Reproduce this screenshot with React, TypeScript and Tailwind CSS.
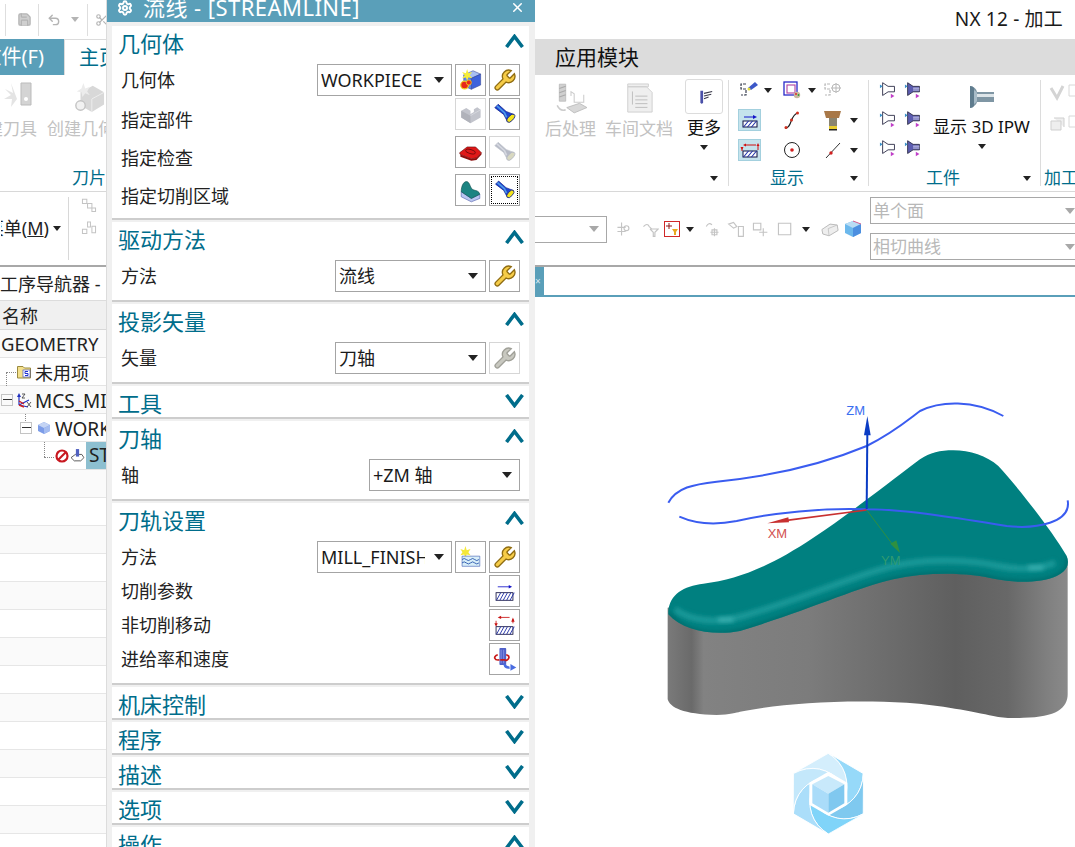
import { ReactNode } from 'react';
import { Save, Undo2, Scissors, Settings, X } from 'lucide-react';

const Caret = ({ cls = 'border-t-[#222]', small }: { cls?: string; small?: boolean }) => (
  <span className={`inline-block shrink-0 w-0 h-0 border-x-transparent ${small ? 'border-x-[4px] border-t-[5px]' : 'border-x-[5.5px] border-t-[6px]'} ${cls}`} />
);

function Chevron({ up }: { up?: boolean }) {
  return (
    <svg width="19" height="14" viewBox="0 0 19 14" className="mt-[8px] shrink-0">
      <path d={up ? 'M1.5 13 L9.5 2.5 L17.5 13' : 'M1.5 1 L9.5 11.5 L17.5 1'} fill="none" stroke="#006d8b" strokeWidth="3.6" />
    </svg>
  );
}

/* ---- dialog button icons, all on a 32 box ---- */
const Wrench = ({ muted }: { muted?: boolean }) => (
  <svg viewBox="0 0 24 24" className="w-[25px] h-[25px]">
    <path
      d="M14.7 6.3a1 1 0 0 0 0 1.4l1.6 1.6a1 1 0 0 0 1.4 0l3.77-3.77a6 6 0 0 1-7.94 7.94l-6.91 6.91a2.12 2.12 0 0 1-3-3l6.91-6.91a6 6 0 0 1 7.94-7.94l-3.76 3.76z"
      fill={muted ? '#c8c8c0' : '#f6cc48'}
      stroke={muted ? '#a0a098' : '#8f6c12'}
      strokeWidth="1.3"
    />
  </svg>
);

const Flashlight = ({ muted }: { muted?: boolean }) => (
  <svg viewBox="0 0 32 32" className="w-full h-full">
    <path d="M4.5 8.5 L8.5 4.5 L18 13 L27 16.5 L19.5 25 L15 16.5 Z" fill={muted ? '#b6bac6' : '#1d45d0'} stroke={muted ? '#c4c8d0' : '#0a1a80'} strokeWidth="0.8" />
    <path d="M7 6.5 L16 14.5 L18.5 20" fill="none" stroke={muted ? '#d5d8e0' : '#4f9ae8'} strokeWidth="2" />
    <ellipse cx="23.5" cy="21" rx="6" ry="3" transform="rotate(-48 23.5 21)" fill={muted ? '#d8d8c0' : '#f4e41c'} stroke={muted ? '#b6bac6' : '#10208c'} strokeWidth="1" />
  </svg>
);

const GeomNew = () => (
  <svg viewBox="0 0 32 32" className="w-full h-full">
    <path d="M8 10 L19 5 L28 9 L17 14 Z" fill="#a8bff2" stroke="#28388a" strokeWidth="0.6" />
    <path d="M17 14 L28 9 V22 L17 27 Z" fill="#3d62dc" stroke="#28388a" strokeWidth="0.6" />
    <path d="M8 10 L17 14 V27 L8 23 Z" fill="#5e86ec" stroke="#28388a" strokeWidth="0.6" />
    <path d="M12 3 L13.5 8 L18 6.5 L15 10.5 L18 14 L13.5 13 L12 17 L10.5 13 L6 14 L9 10.5 L6 6.5 L10.5 8 Z" fill="#f6ee38" />
    <circle cx="9" cy="22" r="4.6" fill="#e8281c" stroke="#f2d020" strokeWidth="1.4" />
    <circle cx="14" cy="19" r="3" fill="#e8281c" stroke="#f2d020" strokeWidth="1" />
  </svg>
);

const PartBlock = () => (
  <svg viewBox="0 0 32 32" className="w-full h-full">
    <path d="M5 12 L11 9 L16 12 L16 16 L20 13.5 L20 10.5 L24 8 L28 11 V20 L16 27 L5 20 Z" fill="#c2c4cc" />
    <path d="M5 12 L16 18 V27 L5 20 Z" fill="#b0b2ba" />
    <path d="M16 18 L20 15.5 L28 11" fill="none" stroke="#d8dae0" strokeWidth="1" />
  </svg>
);

const CheckBlock = () => (
  <svg viewBox="0 0 32 32" className="w-full h-full">
    <path d="M3 17 L12 10 L22 10 L29 17 L23 23 L17 24 L4 19 Z" fill="#e01818" stroke="#600808" strokeWidth="0.7" />
    <path d="M4 19 L17 24 L23 23 L29 17 V19 L23 25.5 L17 26.5 L4 21.5 Z" fill="#8c0c0c" />
    <ellipse cx="16" cy="15.5" rx="6" ry="2.4" transform="rotate(15 16 15.5)" fill="none" stroke="#700a0a" strokeWidth="1" />
  </svg>
);

const CutArea = () => (
  <svg viewBox="0 0 32 32" className="w-full h-full">
    <path d="M5 18 L17 26 L27 21 V26 L17 30 L5 24 Z" fill="#b9c6f0" stroke="#4a58a8" strokeWidth="0.7" />
    <path d="M5 18 C5 11 8 6 11 6 C16 6 15 15 20 16 C23 17 26 17 27 21 L17 26 Z" fill="#1c8482" stroke="#0d4a4a" strokeWidth="0.7" />
  </svg>
);

const Water = () => (
  <svg viewBox="0 0 32 32" className="w-full h-full">
    <path d="M10 3 L11.5 8 L16 6.5 L13.5 10.5 L16 14 L11.5 13 L10 17 L8.5 13 L4 14 L6.5 10.5 L4 6.5 L8.5 8 Z" fill="#f4e838" />
    <path d="M6 15 H27 V27 H6 Z" fill="#d8eef8" stroke="#3858b0" strokeWidth="0.7" />
    <path d="M6 19 q2.6 -2.5 5 0 t5 0 t5 0 t5 0 M6 23 q2.6 -2.5 5 0 t5 0 t5 0 t5 0" fill="none" stroke="#1c4ca8" strokeWidth="1" />
  </svg>
);

const Hatch = ({ x = 6, y = 18, w = 20, h = 9 }: { x?: number; y?: number; w?: number; h?: number }) => (
  <>
    <rect x={x} y={y} width={w} height={h} fill="#fff" stroke="#101040" strokeWidth="1" />
    {[3, 7, 11, 15, 19].filter(d => d < w).map(d => (
      <path key={d} d={`M${x + d - 2.5} ${y + h} L${x + d + 2.5} ${y}`} stroke="#2030a8" strokeWidth="1.1" />
    ))}
  </>
);

const CutParams = () => (
  <svg viewBox="0 0 32 32" className="w-full h-full">
    <path d="M8 11 H23" stroke="#1414c8" strokeWidth="1" />
    <path d="M25 11 L21 9 V13 Z" fill="#1414c8" />
    <Hatch />
  </svg>
);

const NonCut = () => (
  <svg viewBox="0 0 32 32" className="w-full h-full">
    <path d="M10 7 H22" stroke="#c81414" strokeWidth="1" />
    <path d="M8 7 L12 5 V9 Z" fill="#c81414" />
    <path d="M6 11 V16 M26 9 V14" stroke="#c81414" strokeWidth="1" />
    <path d="M6 18 L4 14 H8 Z M26 7 L24 12 H28 Z" fill="#c81414" />
    <Hatch y={18} h={9} />
  </svg>
);

const Feed = () => (
  <svg viewBox="0 0 32 32" className="w-full h-full">
    <rect x="10" y="3" width="8" height="20" rx="1" fill="#5060c8" />
    <path d="M12 5 V21 M15 5 V21" stroke="#8c98e8" strokeWidth="1" />
    <path d="M8 11 C2 13 4 18 10 17 M18 11 C23 12 22 17 17 18 M11 17 H17" fill="none" stroke="#c81818" strokeWidth="2" />
    <path d="M16 22 Q17 27 22 26" fill="none" stroke="#4a6ce0" strokeWidth="3" />
    <path d="M23 22 L30 26 L23 30 Z" fill="#4a6ce0" />
  </svg>
);

function IconBtn({ children, muted, dotted }: { children: ReactNode; muted?: boolean; dotted?: boolean }) {
  return (
    <div className={`w-[31px] h-[32px] shrink-0 border flex items-center justify-center bg-white ${muted ? 'border-[#d6d6d6]' : 'border-[#a4a4a4]'}`}>
      <div className={`w-[27px] h-[28px] flex items-center justify-center ${dotted ? 'border border-dotted border-black' : ''}`}>{children}</div>
    </div>
  );
}

function Dropdown({ text, w }: { text: string; w: string }) {
  return (
    <div className={`${w} h-[32px] shrink-0 border border-[#a4a4a4] bg-white flex items-center pl-[3px] pr-[7px]`}>
      <span className="flex-1 overflow-hidden whitespace-nowrap text-[18px] leading-[30px] text-[#1a1a1a] mr-[9px]">{text}</span>
      <Caret />
    </div>
  );
}

function Row({ label, children, shift }: { label: string; children?: ReactNode; shift?: boolean }) {
  return (
    <div className="h-[32px] flex items-center justify-end gap-[3px] px-[9px]">
      <span className={`mr-auto text-[18px] leading-[24px] text-[#222] ${shift ? 'pt-[12px]' : ''}`}>{label}</span>
      {children}
    </div>
  );
}

function Section({ title, open, children, up }: { title: string; open?: boolean; children?: ReactNode; up?: boolean }) {
  return (
    <div className="bg-white border-b-2 border-[#cdcdcd] shrink-0">
      <div className={`flex justify-between overflow-hidden pl-[6px] pr-[5px] ${open ? 'h-[38px]' : 'h-[31px]'}`}>
        <span className="text-[22px] leading-[35px] text-[#006d8b]">{title}</span>
        <Chevron up={up ?? open} />
      </div>
      {children}
    </div>
  );
}

function Dialog() {
  return (
    <div className="absolute top-0 left-[106px] w-[429px] h-[847px] overflow-hidden bg-[#f0f0f0] border-l border-[#dcdcdc]">
      <div className="h-[22px] bg-[#5a9fb9] flex items-start text-white">
        <Settings size={16} strokeWidth={3} className="ml-[10px]" />
        <span className="ml-[10px] text-[22px] leading-[14px] tracking-[0.45px] whitespace-nowrap">流线 - [STREAMLINE]</span>
        <X size={15} strokeWidth={2.4} className="ml-auto mr-[10px]" />
      </div>
      <div className="flex flex-col gap-[2px] pt-[4px] pl-[5px] pr-[6px]">
        <Section title="几何体" open>
          <Row label="几何体">
            <Dropdown text="WORKPIECE" w="w-[135px]" />
            <IconBtn><GeomNew /></IconBtn>
            <IconBtn><Wrench /></IconBtn>
          </Row>
          <div className="h-[2px]" />
          <Row label="指定部件" shift>
            <IconBtn muted><PartBlock /></IconBtn>
            <IconBtn><Flashlight /></IconBtn>
          </Row>
          <div className="h-[6px]" />
          <Row label="指定检查" shift>
            <IconBtn><CheckBlock /></IconBtn>
            <IconBtn muted><Flashlight muted /></IconBtn>
          </Row>
          <div className="h-[6px]" />
          <Row label="指定切削区域" shift>
            <IconBtn><CutArea /></IconBtn>
            <IconBtn dotted><Flashlight /></IconBtn>
          </Row>
          <div className="h-[12px]" />
        </Section>
        <Section title="驱动方法" open>
          <Row label="方法">
            <Dropdown text="流线" w="w-[151px]" />
            <IconBtn><Wrench /></IconBtn>
          </Row>
          <div className="h-[8px]" />
        </Section>
        <Section title="投影矢量" open>
          <Row label="矢量">
            <Dropdown text="刀轴" w="w-[151px]" />
            <IconBtn muted><Wrench muted /></IconBtn>
          </Row>
          <div className="h-[8px]" />
        </Section>
        <Section title="工具" />
        <Section title="刀轴" open>
          <Row label="轴">
            <Dropdown text="+ZM 轴" w="w-[151px]" />
          </Row>
          <div className="h-[8px]" />
        </Section>
        <Section title="刀轨设置" open>
          <div className="flex flex-col gap-[2px] pb-[8px]">
            <Row label="方法">
              <Dropdown text="MILL_FINISH" w="w-[135px]" />
              <IconBtn><Water /></IconBtn>
              <IconBtn><Wrench /></IconBtn>
            </Row>
            <Row label="切削参数">
              <IconBtn><CutParams /></IconBtn>
            </Row>
            <Row label="非切削移动">
              <IconBtn><NonCut /></IconBtn>
            </Row>
            <Row label="进给率和速度">
              <IconBtn><Feed /></IconBtn>
            </Row>
          </div>
        </Section>
        <Section title="机床控制" />
        <Section title="程序" />
        <Section title="描述" />
        <Section title="选项" />
        <Section title="操作" open />
      </div>
    </div>
  );
}

/* ---- ribbon small icons ---- */
const Small = ({ children, size = 22 }: { children: ReactNode; size?: number }) => (
  <svg viewBox="0 0 22 22" width={size} height={size} className="shrink-0">{children}</svg>
);

const ListTorch = () => (
  <Small>
    <path d="M8 5 H3 V10 H8 V16 H3" fill="none" stroke="#3a4050" strokeWidth="1.2" strokeDasharray="3 1" />
    <path d="M10 9 L17 3 L20 6 L13 11 Z" fill="#3c58c8" />
    <circle cx="11" cy="10" r="1.5" fill="#e8e040" />
  </Small>
);
const NestedSquares = () => (
  <Small>
    <rect x="3" y="3" width="13" height="13" fill="none" stroke="#2828c8" strokeWidth="1.3" />
    <rect x="6" y="6" width="8" height="8" fill="none" stroke="#b040a0" strokeWidth="1.1" />
    <circle cx="16" cy="16" r="3.2" fill="#c8b8a0" />
    <circle cx="15" cy="15" r="0.9" fill="#e02020" />
    <circle cx="17.5" cy="16" r="0.9" fill="#30a030" />
  </Small>
);
const ListCross = () => (
  <Small>
    <path d="M8 5 H3 V10 H8 V16 H3" fill="none" stroke="#b8b8b8" strokeWidth="1.2" strokeDasharray="3 1" />
    <circle cx="14" cy="9" r="4" fill="none" stroke="#b8b8b8" strokeWidth="1" />
    <path d="M14 4 V14 M9 9 H19" stroke="#b8b8b8" strokeWidth="1" />
  </Small>
);
const HatchSmall = ({ red }: { red?: boolean }) => (
  <Small>
    {red ? (
      <>
        <path d="M6 6 H17 M3 8 V12 M19 6 V11" stroke="#d01010" strokeWidth="1" />
        <path d="M4 6 L7 4.5 V7.5 Z M1.5 8 H4.5 L3 11 Z M17.5 7 H20.5 L19 4 Z" fill="#d01010" />
      </>
    ) : (
      <>
        <path d="M5 8 H16" stroke="#1414c8" strokeWidth="1" />
        <path d="M18 8 L14 6 V10 Z" fill="#1414c8" />
      </>
    )}
    <Hatch x={4} y={12} w={14} h={6} />
  </Small>
);
const SCurve = () => (
  <Small>
    <path d="M4 19 C11 20 9 5 17 4" fill="none" stroke="#1a1a1a" strokeWidth="1.2" />
    <circle cx="5" cy="18.5" r="1.5" fill="#d03020" />
    <circle cx="10.5" cy="11" r="1.5" fill="#d03020" />
    <circle cx="16.5" cy="4" r="1.5" fill="#d03020" />
  </Small>
);
const ToolBrown = () => (
  <Small>
    <path d="M2 2 H19 L17 9 H4 Z" fill="#a87848" />
    <rect x="7" y="9" width="8" height="8" fill="#8a8470" />
    <rect x="7" y="17" width="8" height="3" fill="#e8cc30" />
    <rect x="7" y="20" width="8" height="1.5" fill="#222" />
  </Small>
);
const CircleDot = () => (
  <Small>
    <circle cx="11" cy="11" r="7.5" fill="none" stroke="#222" strokeWidth="1" />
    <circle cx="11" cy="11" r="1.8" fill="#d02020" />
  </Small>
);
const LineDot = () => (
  <Small>
    <path d="M4 19 L18 4" stroke="#333" strokeWidth="1" />
    <circle cx="9" cy="14" r="1.7" fill="#d02020" />
  </Small>
);
const Cone = ({ filled }: { filled?: boolean }) => (
  <Small size={20}>
    <path d="M4 3 L10 7 H17 V13 H10 L4 17 Z" fill={filled ? '#5c5cb0' : '#fff'} stroke="#30304a" strokeWidth="1" />
    {filled && <path d="M10 9 H17 M10 11 H17" stroke="#d8d8f0" strokeWidth="1" />}
    <path d="M1 5 L4 7 L1 9 Z" fill="#3a90c8" />
    <path d="M13 15 L17 17.5 L13 20 Z" fill="#c040c8" />
  </Small>
);
const Ipw = () => (
  <svg viewBox="0 0 26 24" width="26" height="24">
    <path d="M1 1 Q7 2 8 7 H25 V17 H8 Q7 21 1 23 Z" fill="#7f96a4" />
    <path d="M1 1 Q4 1 5 3 V21 Q4 23 1 23 Z" fill="#5f7c8e" />
    <path d="M8 9 H25 V12 H8 Z" fill="#dde5e9" />
    <path d="M5 5 Q7 6 8 8 V16 Q7 18 5 19 Z" fill="#a8bcc8" />
  </svg>
);
const FaintDrill = () => (
  <svg viewBox="0 0 32 32" width="34" height="34">
    <path d="M5 3 H11 V19 H5 Z" fill="#d0d0d0" stroke="#bbb" strokeWidth="0.8" />
    <path d="M5 7 L11 5 M5 11 L11 9 M5 15 L11 13" stroke="#aaa" />
    <path d="M16 14 V10 L19 12 V20 H28 V13" fill="none" stroke="#ccc" />
    <path d="M12 25 L24 21 L31 25 L19 30 Z" fill="#d8d8d8" stroke="#bbb" strokeWidth="0.8" />
    <path d="M3 23 Q6 29 11 27" fill="none" stroke="#ccc" strokeWidth="1.5" />
  </svg>
);
const FaintDoc = () => (
  <svg viewBox="0 0 32 32" width="30" height="34">
    <path d="M8 1 H26 V4 H4 V1 Z M4 4 H24 L30 10 V31 H4 Z" fill="#efefef" stroke="#cfcfcf" />
    <path d="M9 9 V23 M12 14 H25 M12 18 H25 M12 22 H25 M12 26 H25" stroke="#bdbdbd" />
  </svg>
);
const FaintTool = () => (
  <svg viewBox="0 0 34 34" width="34" height="34">
    <path d="M8 2 L10 12 L2 8 L8 14 L1 18 L9 18 L8 26 L14 18 Z" fill="#e4e4e4" />
    <path d="M18 2 H28 V24 H18 Z" fill="#d4d4d4" stroke="#bbb" />
    <circle cx="23" cy="18" r="2" fill="#fff" />
  </svg>
);
const FaintCam = () => (
  <svg viewBox="0 0 34 34" width="32" height="32">
    <path d="M8 11 L21 4 L33 11 V24 L20 32 L8 25 Z" fill="#d8d8d8" />
    <path d="M20 32 V18 L33 11" fill="none" stroke="#eee" />
    <circle cx="8" cy="25" r="5" fill="#f2f2f2" stroke="#c4c4c4" strokeWidth="1.5" />
    <path d="M11 1 L13 7 L18 5 L15 10 L18 14 L13 12 L10 16 L9 11 L4 10 L9 7 Z" fill="#ececec" />
  </svg>
);

function ToolCol({ icon, label, cls = '', iconCls = '', color = 'text-[#c2c2c2]' }: { icon: ReactNode; label: string; cls?: string; iconCls?: string; color?: string }) {
  return (
    <div className={`flex flex-col items-center ${cls}`}>
      <div className={`h-[36px] flex items-center justify-center ${iconCls}`}>{icon}</div>
      <span className={`text-[17px] leading-[24px] mt-px whitespace-nowrap ${color}`}>{label}</span>
    </div>
  );
}

const GroupFoot = ({ label, pl, pr = '', arrow }: { label: string; pl: string; pr?: string; arrow?: boolean }) => (
  <div className={`mt-auto flex items-center justify-between h-[16px] ${pl} ${pr}`}>
    <span className="text-[17px] leading-[24px] text-[#006d8b] whitespace-nowrap">{label}</span>
    {arrow && <Caret small />}
  </div>
);

const Lit = ({ children }: { children: ReactNode }) => (
  <div className="w-[23px] h-[22px] ml-[9px] bg-[#c5e3ec] border border-[#a3d0de] flex items-center justify-center">{children}</div>
);

function Ribbon() {
  return (
    <div className="h-[117px] border-b border-[#d8d8d8] flex shrink-0">
      {/* hidden behind the dialog for the most part */}
      <div className="w-[535px] shrink-0 flex flex-col my-[5px]">
        <div className="flex">
          <div className="w-[37px] overflow-hidden flex justify-end">
            <ToolCol icon={<FaintTool />} label="建刀具" cls="items-end" />
          </div>
          <ToolCol icon={<FaintCam />} label="创建几何体" cls="ml-[10px] items-start w-[59px] overflow-hidden" iconCls="ml-[26px]" />
        </div>
        <GroupFoot label="刀片" pl="pl-[72px]" />
      </div>

      <div className="w-[194px] shrink-0 flex flex-col border-r border-[#dcdcdc] my-[5px]">
        <div className="flex pl-[10px]">
          <ToolCol icon={<FaintDrill />} label="后处理" cls="w-[51px]" />
          <ToolCol icon={<FaintDoc />} label="车间文档" cls="w-[68px] ml-[9px]" />
          <div className="ml-[12px] w-[38px] flex flex-col items-center">
            <div className="w-[38px] h-[35px] -mt-px border border-[#dcdcdc] rounded-[3px] flex items-center justify-center">
              <svg viewBox="0 0 22 22" width="20" height="20">
                <path d="M7 4 H10 V17 Q8.5 20 7 17 Z" fill="#4a50a8" />
                <path d="M11 7 L20 5 M11 10 L19 8 M11 13 L16 11" stroke="#3a3a4a" strokeWidth="1.2" />
              </svg>
            </div>
            <span className="text-[17px] leading-[24px] mt-[2px] text-[#111] whitespace-nowrap">更多</span>
            <span className="mt-[5px] flex"><Caret small /></span>
          </div>
        </div>
        <GroupFoot label="" pl="pl-0" pr="pr-[10px]" arrow />
      </div>

      <div className="w-[140px] shrink-0 flex flex-col border-r border-[#dcdcdc] my-[5px]">
        <div className="-mt-[5px] grid grid-cols-[52px_41px_auto] grid-rows-[30px_30px_30px] items-center">
          <div className="flex items-center gap-[4px] pl-[9px]"><ListTorch /><Caret small /></div>
          <div className="flex items-center gap-[5px]"><NestedSquares /><Caret small /></div>
          <div className="flex items-center"><ListCross /></div>
          <Lit><HatchSmall /></Lit>
          <div><SCurve /></div>
          <div className="flex items-center gap-[6px]"><ToolBrown /><Caret small /></div>
          <Lit><HatchSmall red /></Lit>
          <div><CircleDot /></div>
          <div className="flex items-center gap-[6px]"><LineDot /><Caret small /></div>
        </div>
        <GroupFoot label="显示" pl="pl-[41px]" pr="pr-[10px]" arrow />
      </div>

      <div className="w-[172px] shrink-0 flex flex-col border-r border-[#dcdcdc] my-[5px]">
        <div className="flex">
          <div className="-mt-[5px] grid grid-cols-[25px_25px] grid-rows-[30px_28px_30px] items-center pl-[10px] w-[62px] shrink-0">
            <Cone /><Cone filled /><Cone /><Cone filled /><Cone /><Cone filled />
          </div>
          <div className="flex flex-col items-center ml-px w-[99px]">
            <div className="h-[36px] flex items-center -mt-[1px]"><Ipw /></div>
            <span className="text-[17px] leading-[24px] text-[#111] whitespace-nowrap">显示 3D IPW</span>
            <span className="mt-[5px] flex"><Caret small /></span>
          </div>
        </div>
        <GroupFoot label="工件" pl="pl-[57px]" pr="pr-[9px]" arrow />
      </div>

      <div className="flex-1 flex flex-col my-[5px] pl-[3px] overflow-hidden">
        <div className="flex flex-col gap-[11px] pl-[5px] pt-[4px]">
          <svg viewBox="0 0 30 20" width="30" height="20"><path d="M2 4 L8 14 L14 2" fill="none" stroke="#d4d4d4" strokeWidth="3" /><path d="M20 1 H30 V12 H20 Z" fill="none" stroke="#d8d8d8" /></svg>
          <svg viewBox="0 0 30 20" width="30" height="20"><path d="M2 6 H12 V15 H2 Z M5 3 H15 V12" fill="#eee" stroke="#cfcfcf" /><path d="M20 1 H30 V12 H20 Z" fill="none" stroke="#d8d8d8" /></svg>
        </div>
        <GroupFoot label="加工" pl="pl-0" />
      </div>
    </div>
  );
}

const FaintSel = ({ d, cls = '', size = 18 }: { d: string; cls?: string; size?: number }) => (
  <svg viewBox="0 0 22 22" width={size} height={size} className={`shrink-0 ${cls}`}>
    <path d={d} fill="none" stroke="#c4c4c4" strokeWidth="1.4" />
  </svg>
);

function SelectionBar() {
  return (
    <div className="h-[73px] flex shrink-0">
      <div className="w-[535px] shrink-0 flex">
        <div className="w-[69px] border-r border-[#d8d8d8] my-[5px] flex items-center justify-end pr-[7px] gap-[4px]">
          <span className="text-[18px] whitespace-nowrap text-[#222] overflow-hidden w-[48px] flex justify-end">菜单(<span className="underline">M</span>)</span>
          <Caret small />
        </div>
        <div className="flex flex-col gap-[6px] pl-[12px] pt-[5px]">
          <FaintSel size={16} d="M2 3 H8 V9 H2 Z M9 9 H15 V15 H9 Z M15 15 H20 V20 H15 Z" />
          <FaintSel size={16} d="M2 14 H8 V20 H2 Z M9 4 H13 V11 H9 Z M15 10 H20 V19 H15 Z" />
        </div>
      </div>
      <div className="flex items-center h-[73px] flex-1 min-w-0">
        <div className="w-[72px] h-[27px] mt-px border border-l-0 border-[#a8a8a8] flex items-center justify-end pr-[7px] shrink-0"><Caret cls="border-t-[#a8a8a8]" /></div>
        <div className="w-[255px] flex items-center mt-px shrink-0">
          <FaintSel cls="ml-[8px]" d="M8 3 V19 M3 9 H13 M3 14 H13 M14 7 A3 3 0 1 1 14 13 A3 3 0 1 1 14 7" />
          <FaintSel cls="ml-[8px]" d="M3 8 Q8 3 10 8 L13 11 H21 L17 15 V20 H15 V15 L11 11" />
          <svg viewBox="0 0 16 16" width="16" height="16" className="shrink-0 ml-[5px]">
            <rect x="0.5" y="0.5" width="15" height="15" fill="#fff" stroke="#d02828" />
            <path d="M5 2 V8 M2 5 H8" stroke="#901818" />
            <path d="M8 8 H14 L12 11 V14 H10 V11 Z" fill="#e8a820" />
          </svg>
          <span className="flex ml-[6px]"><Caret small /></span>
          <FaintSel cls="ml-[9px]" d="M4 8 Q7 2 11 6 M14 10 V20 M9 15 H19 M11 12 H17 V18 H11 Z" />
          <FaintSel cls="ml-[6px]" d="M2 5 L8 3 L12 8 L8 10 Z M14 8 H20 V20 H14 Z" />
          <FaintSel cls="ml-[6px]" d="M3 4 H12 V12 H3 Z M15 10 V20 M10 15 H20" />
          <FaintSel cls="ml-[7px]" d="M3 4 H18 V18 H3 Z" />
          <span className="flex ml-[8px]"><Caret small /></span>
          <svg viewBox="0 0 20 16" width="18" height="15" className="shrink-0 ml-[11px]">
            <path d="M1 8 L10 2 L18 3 L19 9 L9 15 L2 13 Z" fill="#eee" stroke="#b4b4b4" />
            <path d="M9 15 L8 7 L18 3" fill="none" stroke="#c4c4c4" />
          </svg>
          <svg viewBox="0 0 18 18" width="18" height="18" className="shrink-0 ml-[5px]">
            <path d="M1 4 L9 1 L17 4 V13 L9 17 L1 13 Z" fill="#6cb8ec" />
            <path d="M1 4 L9 8 L17 4 L9 1 Z" fill="#b8dcf4" />
            <path d="M9 8 V17 L17 13 V4 Z" fill="#4c8fe0" />
            <path d="M9 1 L17 4" stroke="#d86090" />
          </svg>
        </div>
        <div className="flex flex-col gap-[9px] w-[213px] shrink-0 pl-[8px]">
          {['单个面', '相切曲线'].map(t => (
            <div key={t} className="w-[220px] h-[27px] border border-[#a8a8a8] flex items-center pl-[2px]">
              <span className="w-[192px] text-[17px] text-[#b8b8b8] whitespace-nowrap">{t}</span>
              <Caret cls="border-t-[#a8a8a8]" />
            </div>
          ))}
        </div>
      </div>
    </div>
  );
}

const Dotted = ({ cls }: { cls: string }) => <span className={`absolute border-dotted border-[#888] ${cls}`} />;

const Minus = () => (
  <span className="w-[12px] h-[12px] border border-[#c4c4c4] flex items-center justify-center shrink-0">
    <span className="w-[9px] h-px bg-[#333]" />
  </span>
);

function Navigator() {
  const blanks = Array.from({ length: 14 });
  return (
    <div className="w-[106px] shrink-0 overflow-hidden">
      <div className="h-[34px] text-[18px] leading-[34px] text-[#222] whitespace-nowrap border-b border-[#dcdcdc]">工序导航器 -</div>
      <div className="h-[29px] bg-[#f0f0f0] border-b border-[#d8d8d8] pl-[2px] text-[18px] leading-[30px] text-[#222]">名称</div>
      <div className="h-[28px] border-b border-[#e4e4e4] bg-[#fafafa] text-[18.5px] leading-[27px] text-[#222] pl-px">GEOMETRY</div>
      <div className="h-[28px] border-b border-[#e4e4e4] flex items-center relative pl-[17px] bg-white">
        <Dotted cls="left-[6px] top-[14px] w-[10px] border-t" />
        <Dotted cls="left-[6px] top-[14px] h-[14px] border-l" />
        <svg viewBox="0 0 14 14" width="14" height="14" className="shrink-0">
          <path d="M0.5 1.5 H6 L7.5 3 H13.5 V13 H0.5 Z" fill="#f4e08c" stroke="#9a8a40" />
          <rect x="6" y="5" width="7" height="7" fill="#fff" stroke="#3040c8" strokeWidth="0.6" />
          <path d="M11 6.5 H8 V8.5 H11 V10.5 H8" fill="none" stroke="#2030d0" />
        </svg>
        <span className="ml-[4px] pt-[3px] text-[18px] leading-[24px] text-[#222]">未用项</span>
      </div>
      <div className="h-[28px] border-b border-[#e4e4e4] bg-[#fafafa] flex items-center pl-px whitespace-nowrap">
        <Minus />
        <svg viewBox="0 0 16 16" width="16" height="16" className="shrink-0 ml-[3px]">
          <path d="M3 13 V3 M3 13 L13 8 M3 13 L12 15" stroke="#2030c0" strokeWidth="1.2" />
          <path d="M3 1 L1 5 H5 Z" fill="#2030c0" />
          <path d="M3 9 L8 12 M3 13 L8 15" stroke="#d02020" strokeWidth="1.4" />
          <path d="M6 2 H9 L6 6 H9" fill="none" stroke="#333" strokeWidth="0.8" />
          <path d="M11 10 L15 15 M15 10 L11 15" stroke="#333" strokeWidth="0.8" />
        </svg>
        <span className="ml-[3px] pt-[2px] text-[19px] leading-[24px] text-[#222]">MCS_MILL</span>
      </div>
      <div className="h-[28px] border-b border-[#e4e4e4] flex items-center pl-[20px] bg-white relative whitespace-nowrap">
        <Dotted cls="left-[25px] top-0 h-[7px] border-l" />
        <Minus />
        <svg viewBox="0 0 14 14" width="14" height="14" className="shrink-0 ml-[5px]">
          <path d="M1 4 L7 1 L13 4 V10 L7 13 L1 10 Z" fill="#7c9ce8" />
          <path d="M1 4 L7 7 L13 4 L7 1 Z" fill="#c4d4f4" />
          <path d="M7 7 V13 L13 10 V4 Z" fill="#a4bcf0" />
        </svg>
        <span className="ml-[4px] pt-[2px] text-[19px] leading-[24px] text-[#222]">WORKPIECE</span>
      </div>
      <div className="h-[28px] border-b border-[#e4e4e4] bg-white flex items-center pl-[55px] relative whitespace-nowrap">
        <Dotted cls="left-[44px] top-0 h-[15px] border-l" />
        <Dotted cls="left-[44px] top-[15px] w-[10px] border-t" />
        <svg viewBox="0 0 14 14" width="14" height="14" className="shrink-0">
          <circle cx="7" cy="7" r="5.5" fill="none" stroke="#c81820" strokeWidth="2.2" />
          <path d="M3 11 L11 3" stroke="#c81820" strokeWidth="2.2" />
        </svg>
        <svg viewBox="0 0 14 14" width="15" height="15" className="shrink-0 ml-px">
          <path d="M1 9 L5 6 H11 L13 9 L10 12 H4 Z" fill="#fff" stroke="#444" strokeWidth="0.8" />
          <rect x="5.5" y="1" width="3" height="7" fill="#5060c0" />
        </svg>
        <span className="ml-px h-[27px] w-[30px] bg-[#8dbfd0] pl-[3px] text-[19px] leading-[27px] text-[#222] overflow-hidden">STREAMLINE</span>
      </div>
      {blanks.map((_, i) => (
        <div key={i} className={`h-[28px] border-b border-[#e6e6e6] ${i % 2 === 0 ? 'bg-[#fafafa]' : 'bg-white'}`} />
      ))}
    </div>
  );
}

/* part model, coordinates taken at 3x */
const TOP_SHAPE =
  'M85 660 C90 610 130 585 190 578 C300 565 400 520 520 440 C620 375 720 295 840 205 C870 185 900 178 940 178 C990 178 1040 195 1075 225 C1130 285 1230 410 1280 495 C1290 520 1280 540 1250 555 C1200 578 1120 575 1070 565 C990 545 870 540 760 565 C650 590 500 660 300 720 C220 735 130 720 85 670 Z';

function Viewport() {
  const petals = ['#d4eefc', '#96d9f9', '#7fc9ef', '#80d4f9', '#abdefa', '#c4e8fb'];
  return (
    <svg viewBox="0 0 1305 1371" width="435" height="457" className="ml-[534px] mt-[94px] shrink-0">
      <defs>
        <linearGradient id="wall" x1="83" x2="1283" y1="0" y2="0" gradientUnits="userSpaceOnUse">
          <stop offset="0" stopColor="#7a7a7a" />
          <stop offset="0.06" stopColor="#6a6a6a" />
          <stop offset="0.09" stopColor="#828282" />
          <stop offset="0.35" stopColor="#7c7c7c" />
          <stop offset="0.72" stopColor="#5f5f5f" />
          <stop offset="0.85" stopColor="#686868" />
          <stop offset="0.95" stopColor="#808080" />
          <stop offset="1" stopColor="#8a8a8a" />
        </linearGradient>
        <filter id="soft" x="-10%" y="-10%" width="120%" height="120%"><feGaussianBlur stdDeviation="6" /></filter>
        <clipPath id="topClip"><path d={TOP_SHAPE} /></clipPath>
      </defs>
      <path
        d="M83 650 V925 C90 950 130 970 230 972 C270 970 290 965 300 962 C420 938 600 925 800 935 C900 942 1000 962 1060 975 C1090 982 1120 982 1150 980 C1250 980 1283 950 1283 910 V520 L760 540 Z"
        fill="url(#wall)"
      />
      <path d={TOP_SHAPE} fill="#008080" />
      <g clipPath="url(#topClip)">
        <path d="M88 665 C130 730 230 735 300 720 C500 660 650 590 760 565 C870 540 990 545 1070 565 C1120 575 1200 578 1250 555 C1280 540 1290 520 1280 495" fill="none" stroke="#006868" strokeWidth="10" filter="url(#soft)" />
        <path d="M105 655 C160 695 240 695 310 675 C500 620 650 550 760 525 C870 502 990 505 1075 525 C1120 535 1190 538 1245 515" fill="none" stroke="#1d9a9a" strokeWidth="18" filter="url(#soft)" />
        <path d="M235 686 H280 M1165 530 H1210" fill="none" stroke="#3ab0b0" strokeWidth="12" filter="url(#soft)" />
      </g>

      <path d="M85 335 C110 290 160 280 230 272 C400 255 560 215 680 165 C760 125 800 90 840 60 C900 30 1000 25 1090 75" fill="none" stroke="#3a5cf0" strokeWidth="6" />
      <path d="M118 377 C170 400 230 402 290 390 C400 365 550 350 680 355 C800 355 980 385 1100 405 C1190 415 1295 395 1283 328" fill="none" stroke="#3a5cf0" strokeWidth="6" />

      <path d="M680 354 L682 130" stroke="#0a3cc4" strokeWidth="6" />
      <path d="M682 75 L672 133 H692 Z" fill="#0a3cc4" />
      <text x="619" y="71" fontFamily="Liberation Sans, sans-serif" fontSize="39" fill="#3a6ef0">ZM</text>

      <path d="M680 357 L440 388" stroke="#c83030" strokeWidth="5" />
      <path d="M382 397 L445 379 L447 394 Z" fill="#c83030" />
      <text x="383" y="442" fontFamily="Liberation Sans, sans-serif" fontSize="39" fill="#d25050">XM</text>

      <path d="M680 357 L765 470" stroke="#2f8f40" strokeWidth="3" />
      <path d="M780 486 L751 458 L769 448 Z" fill="#2f9040" />
      <text x="723" y="521" fontFamily="Liberation Sans, sans-serif" fontSize="39" fill="#2f9a70">YM</text>

      {petals.map((c, i) => (
        <path
          key={c}
          transform={`rotate(${i * 60} 565 1208)`}
          d="M458 1148 L565 1087 Q642 1135 613 1236 L565 1208 L613 1180 Q540 1105 458 1148 Z"
          fill={c}
          stroke="#fff"
          strokeWidth="2.5"
        />
      ))}
      <path d="M565 1142 L622 1175 V1241 L565 1274 L508 1241 V1175 Z" fill="#fff" />
      <path d="M565 1155 L613 1180 L565 1208 L517 1180 Z" fill="#c8e9fb" />
      <path d="M517 1180 L565 1208 V1265 L517 1237 Z" fill="#aadcf9" />
      <path d="M613 1180 L565 1208 V1265 L613 1237 Z" fill="#80c8ef" />
    </svg>
  );
}

export default function App() {
  return (
    <div className="relative w-[1075px] h-[847px] overflow-hidden bg-white font-['Noto_Sans','Noto_Sans_CJK_SC',sans-serif] flex flex-col">
      {/* quick access + title */}
      <div className="h-[39px] shrink-0 flex items-center text-[#b4b4b4]">
        <div className="w-[6px] h-[32px] border-r border-[#dedede]" />
        <Save size={15} strokeWidth={2} className="ml-[11px]" fill="#cfcfcf" />
        <div className="ml-[6px] h-[32px] border-r border-[#dedede]" />
        <Undo2 size={14} strokeWidth={2.4} className="ml-[8px]" />
        <span className="ml-[10px] flex"><Caret small cls="border-t-[#b4b4b4]" /></span>
        <div className="ml-[8px] h-[32px] border-r border-[#dedede]" />
        <Scissors size={14} className="ml-[7px]" />
        <span className="ml-auto mr-[12px] text-[19px] tracking-[0.2px] text-[#1a1a1a] whitespace-nowrap">NX 12 - 加工</span>
      </div>

      {/* tabs */}
      <div className="h-[36px] shrink-0 bg-[#dcdcdc] flex items-center">
        <div className="w-[64px] h-full bg-[#5a9fb9] text-white text-[20px] leading-[36px] whitespace-nowrap overflow-hidden flex justify-end pr-[20px]">文件(F)</div>
        <div className="w-[60px] h-full bg-white ml-px pl-[14px] text-[#006d8b] text-[20px] leading-[36px] whitespace-nowrap mt-px">主页</div>
        <span className="ml-[430px] text-[21px] leading-[36px] text-[#111] whitespace-nowrap">应用模块</span>
      </div>

      <Ribbon />
      <SelectionBar />

      <div className="flex-1 min-h-0 flex border-t-2 border-[#a8a8a8]">
        <Navigator />
        <div className="flex-1 min-w-0 flex flex-col">
          <div className="h-[30px] shrink-0 ml-[429px] border-b-2 border-[#5a9fb9] flex">
            <div className="w-[9px] bg-[#5a9fb9] text-[#d8e8f0] text-[10px] leading-[28px] overflow-hidden">×</div>
          </div>
          <Viewport />
        </div>
      </div>

      <Dialog />
    </div>
  );
}
